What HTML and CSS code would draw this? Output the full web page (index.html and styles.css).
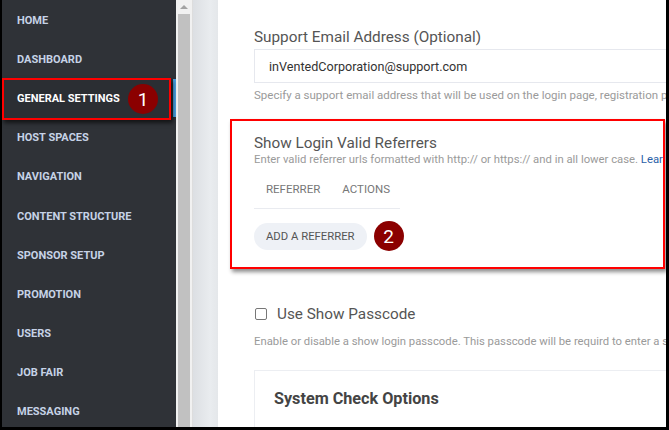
FILE: index.html
```html
<!DOCTYPE html>
<html lang="en">
<head>
  <meta charset="UTF-8">
  <title>General Settings</title>
  <link rel="stylesheet" href="styles.css">
</head>
<body>
  <div class="frame">
    <nav class="sidebar">
      <a class="nav-item">HOME</a>
      <a class="nav-item">DASHBOARD</a>
      <a class="nav-item active">GENERAL SETTINGS<span class="badge badge-one">1</span></a>
      <a class="nav-item">HOST SPACES</a>
      <a class="nav-item">NAVIGATION</a>
      <a class="nav-item">CONTENT STRUCTURE</a>
      <a class="nav-item">SPONSOR SETUP</a>
      <a class="nav-item">PROMOTION</a>
      <a class="nav-item">USERS</a>
      <a class="nav-item">JOB FAIR</a>
      <a class="nav-item">MESSAGING</a>
    </nav>
    <div class="scrollbar">
      <div class="scroll-arrow"></div>
      <div class="scroll-thumb"></div>
    </div>
    <div class="gutter"></div>

    <main class="content">
      <div class="inner">
        <div class="field">
          <div class="field-label">Support Email Address (Optional)</div>
          <div class="input">inVentedCorporation@support.com</div>
          <div class="help">Specify a support email address that will be used on the login page, registration page and in system emails.</div>
        </div>

        <section class="referrers">
          <div class="field-label">Show Login Valid Referrers</div>
          <div class="help">Enter valid referrer urls formatted with http:// or https:// and in all lower case. <span class="link">Learn more</span></div>
          <div class="table-head">
            <span>REFERRER</span>
            <span>ACTIONS</span>
          </div>
          <div class="btn-row">
            <button class="btn">ADD A REFERRER</button>
            <span class="badge">2</span>
          </div>
        </section>

        <div class="field passcode">
          <label class="check">
            <span class="box"></span>
            Use Show Passcode
          </label>
          <div class="help">Enable or disable a show login passcode. This passcode will be requird to enter a show.</div>
        </div>

        <div class="card">
          <h2>System Check Options</h2>
        </div>
      </div>
    </main>
  </div>
</body>
</html>
```

FILE: styles.css
```css
body {
  margin: 0;
  font-family: Roboto, "Liberation Sans", sans-serif;
  background: #fff;
}
.frame {
  display: flex;
  width: 669px;
  height: 430px;
  box-sizing: border-box;
  border-left: 2px solid #000;
  border-right: 3px solid #000;
  border-bottom: 3px solid #000;
  overflow: hidden;
}

/* sidebar */
.sidebar {
  width: 174px;
  flex: none;
  background: #2f3237;
  display: flex;
  flex-direction: column;
  padding-top: 1px;
}
.nav-item {
  position: relative;
  height: 39.1px;
  flex: none;
  display: flex;
  align-items: center;
  padding-left: 15px;
  font-size: 11px;
  font-weight: bold;
  color: #c6d2e6;
}
.nav-item.active {
  color: #fff;
  background: #2b2e33;
}
.nav-item.active::before {
  content: "";
  position: absolute;
  right: 0;
  top: 0;
  bottom: 1px;
  width: 3px;
  background: #4a9fe0;
}
.nav-item.active::after {
  content: "";
  position: absolute;
  left: 0;
  top: -1px;
  width: 165px;
  height: 38px;
  border: 2px solid #f00;
  box-shadow: 2px 3px 4px rgba(0,0,0,0.6);
}
.badge {
  width: 30px;
  height: 30px;
  border-radius: 50%;
  background: #8b0000;
  color: #fff;
  font-size: 19px;
  font-weight: normal;
  display: flex;
  align-items: center;
  justify-content: center;
}
.badge-one {
  position: absolute;
  left: 126px;
  top: 5px;
}

.scrollbar {
  width: 17px;
  flex: none;
  background: #f1f1f1;
  border-right: 1px solid #ddd;
  box-sizing: border-box;
}
.scroll-arrow {
  width: 0;
  height: 0;
  margin: 5px auto 5px;
  border-left: 4px solid transparent;
  border-right: 4px solid transparent;
  border-bottom: 4px solid #a3a3a3;
}
.scroll-thumb {
  margin: 3px 2px 0 2px;
  height: 420px;
  background: #c1c1c1;
}
.gutter {
  width: 25px;
  flex: none;
  background: linear-gradient(to right, #dcdfe3, #e9ecef 70%, #e4e7ea);
}

/* main */
.content {
  flex: 1;
  overflow: hidden;
  padding-left: 12px;
}
.inner {
  width: 700px;
}
.field {
  padding-left: 24px;
}
.field-label {
  font-size: 15.3px;
  color: #555;
  padding-top: 27px;
  line-height: 20px;
}
.input {
  margin-top: 2px;
  height: 34px;
  box-sizing: border-box;
  border: 1px solid #e6e8ee;
  padding-left: 14px;
  display: flex;
  align-items: center;
  font-size: 12.6px;
  color: #333;
}
.help {
  font-size: 11.5px;
  color: #9a9a9a;
  margin-top: 5px;
}
.referrers .help {
  font-size: 11.3px;
}
.link {
  color: #2a5fa8;
}

.referrers {
  margin-top: 17px;
  width: 435px;
  height: 150px;
  box-sizing: border-box;
  border: 2px solid #f00;
  box-shadow: 2px 3px 4px rgba(0,0,0,0.45);
  padding-left: 22px;
  white-space: nowrap;
  overflow: hidden;
}
.referrers .field-label {
  padding-top: 12px;
}
.referrers .help {
  margin-top: 0;
}
.table-head {
  width: 134px;
  display: flex;
  gap: 22px;
  padding: 16px 0 12px 12px;
  border-bottom: 1px solid #e9ebf0;
  font-size: 11.5px;
  color: #777;
}
.btn-row {
  display: flex;
  align-items: center;
  gap: 7px;
  margin-top: 12px;
}
.btn {
  height: 27px;
  padding: 0 12px;
  border: none;
  border-radius: 14px;
  background: #eef1f6;
  font-family: Roboto, "Liberation Sans", sans-serif;
  font-size: 11.3px;
  color: #555;
}

.passcode {
  padding-top: 36px;
}
.check {
  display: flex;
  align-items: center;
  gap: 10px;
  font-size: 15.3px;
  color: #555;
}
.box {
  width: 10px;
  height: 10px;
  border: 1px solid #777;
  border-radius: 2px;
  margin-left: 1px;
}
.passcode .help {
  margin-top: 12px;
  font-size: 11.3px;
}

.card {
  margin: 22px 0 0 24px;
  border: 1px solid #eceef2;
  height: 80px;
  padding-left: 19px;
}
.card h2 {
  margin: 0;
  padding-top: 18px;
  font-size: 16.2px;
  color: #444;
}
```
